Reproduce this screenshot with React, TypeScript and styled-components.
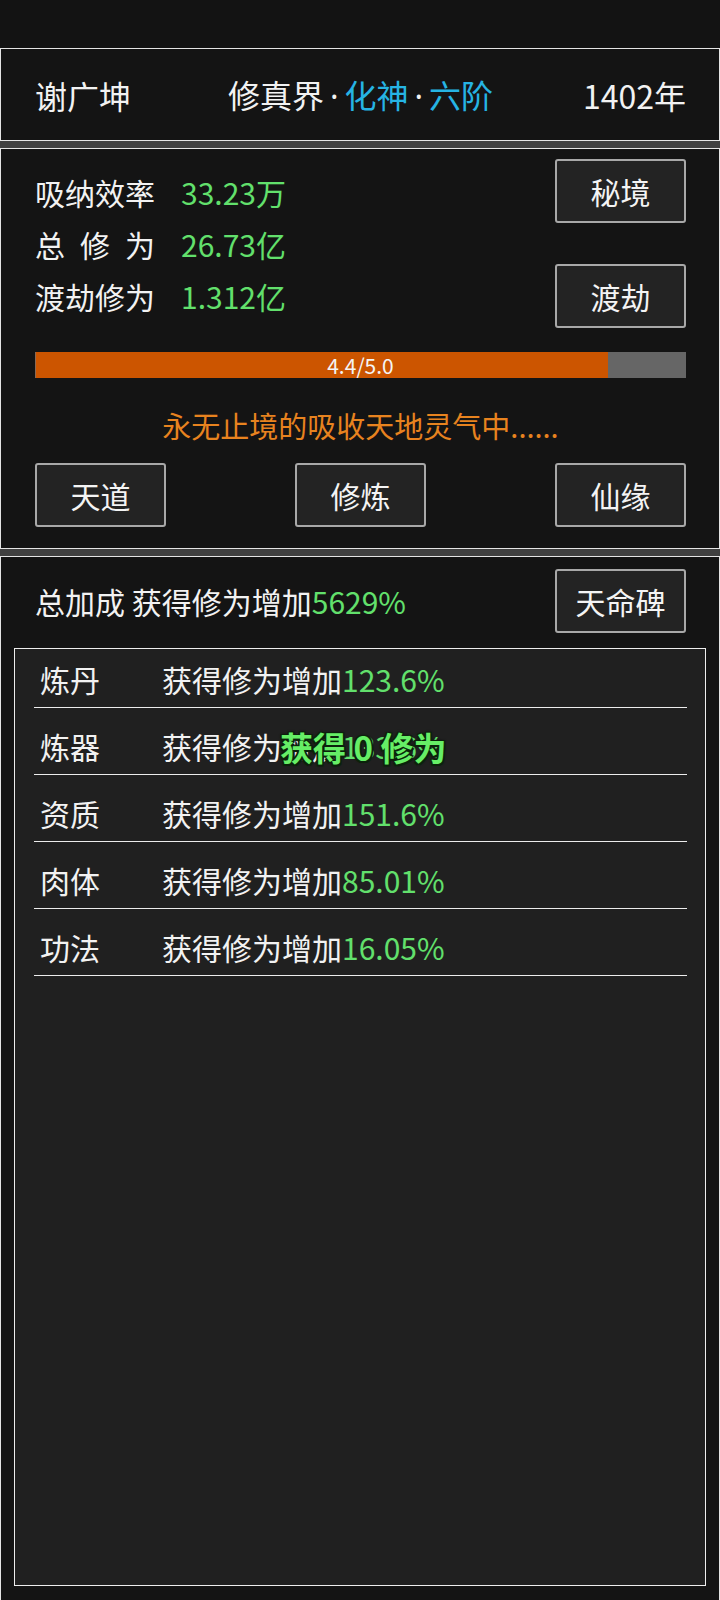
import React from 'react';
import styled, { createGlobalStyle } from 'styled-components';

const GlobalStyle = createGlobalStyle`
  html, body {
    margin: 0;
    padding: 0;
    background: #141414;
  }
  body {
    font-family: "Noto Sans CJK SC", "Noto Sans", sans-serif;
    color: #f2f2f2;
  }
  * {
    box-sizing: border-box;
  }
`;

const Page = styled.div`
  width: 720px;
  min-height: 1600px;
  display: flex;
  flex-direction: column;
  background: #141414;
`;

const TopBar = styled.div`
  height: 48px;
  flex: none;
  background: #131313;
`;

const Stack = styled.div`
  flex: 1;
  display: flex;
  flex-direction: column;
  gap: 7px;
  background: #404040;
`;

const Panel = styled.section<{ $grow?: boolean }>`
  background: #141414;
  border: 1px solid #e4e4e4;
  border-bottom: ${(p) => (p.$grow ? 'none' : '1px solid #e4e4e4')};
  padding: 0 33px 0 34px;
  ${(p) => (p.$grow ? 'flex: 1; display: flex; flex-direction: column;' : '')}
`;

const Header = styled(Panel)`
  height: 93px;
  display: grid;
  grid-template-columns: 1fr auto 1fr;
  align-items: center;
  font-size: 32px;
  line-height: 40px;
`;

const Name = styled.div`
  justify-self: start;
`;

const Realm = styled.div`
  justify-self: center;
`;

const Year = styled.div`
  justify-self: end;
`;

const Blue = styled.span`
  color: #26b4e4;
`;

const Dot = styled.span`
  font-family: "Noto Sans", sans-serif;
  margin: 0 6px;
  color: #f2f2f2;
`;

const StatsPanel = styled(Panel)`
  padding-top: 10px;
  padding-bottom: 21px;
`;

const StatsGrid = styled.div`
  display: flex;
  justify-content: space-between;
  align-items: center;
`;

const StatList = styled.div`
  display: flex;
  flex-direction: column;
`;

const StatRow = styled.div`
  display: flex;
  align-items: center;
  height: 52px;
  font-size: 30px;
`;

const StatLabel = styled.span<{ $spread?: boolean }>`
  display: inline-block;
  width: 146px;
  padding-right: 26px;
  text-align: ${(p) => (p.$spread ? 'justify' : 'left')};
  text-align-last: ${(p) => (p.$spread ? 'justify' : 'auto')};
`;

const Green = styled.span`
  color: #62e06c;
`;

const SideButtons = styled.div`
  display: flex;
  flex-direction: column;
  gap: 41px;
`;

const Button = styled.button`
  width: 131px;
  height: 64px;
  padding: 0;
  background: #232323;
  border: 2px solid #a8a8a8;
  border-radius: 3px;
  color: #f4f4f4;
  font-family: inherit;
  font-size: 30px;
  line-height: 1;
`;

const Bar = styled.div`
  position: relative;
  margin-top: 24px;
  height: 26px;
  background: #666666;
`;

const BarFill = styled.div`
  height: 100%;
  background: #cc5500;
  border-left: 1px solid #8a6a55;
`;

const BarText = styled.div`
  position: absolute;
  inset: 0;
  text-align: center;
  font-size: 21px;
  line-height: 26px;
  color: #f4f4f4;
`;

const Status = styled.div`
  margin-top: 27px;
  text-align: center;
  font-size: 29px;
  line-height: 40px;
  color: #e8831f;
`;

const ActionRow = styled.div`
  margin-top: 18px;
  display: flex;
  justify-content: space-between;
`;

const BonusPanel = styled(Panel)`
  padding: 12px 0 14px;
`;

const BonusHead = styled.div`
  display: flex;
  justify-content: space-between;
  align-items: center;
  padding: 0 33px 0 34px;
  font-size: 30px;
`;

const BonusBox = styled.div`
  position: relative;
  flex: 1;
  margin: 15px 13px 0;
  background: #202020;
  border: 1px solid #eeeeee;
  padding: 0 18px 0 19px;
`;

const BonusRow = styled.div`
  display: flex;
  align-items: flex-end;
  height: 67px;
  padding: 0 0 8px 6px;
  border-bottom: 1px solid #ececec;
  font-size: 30px;
  line-height: 40px;
  &:first-child {
    height: 59px;
  }
`;

const RowLabel = styled.span`
  width: 122px;
`;

const FloatText = styled.div`
  position: absolute;
  left: 265px;
  top: 78px;
  font-size: 33px;
  font-weight: 700;
  line-height: 40px;
  color: #66ee66;
  white-space: pre;
  text-shadow: -1.5px -1.5px 0 #0b220b, 1.5px -1.5px 0 #0b220b,
    -1.5px 1.5px 0 #0b220b, 1.5px 1.5px 0 #0b220b, 0 0 3px #000;
  pointer-events: none;
`;

const stats = [
  { label: '吸纳效率', value: '33.23万' },
  { label: '总修为', value: '26.73亿', spread: true },
  { label: '渡劫修为', value: '1.312亿' }
];

const bonuses = [
  { label: '炼丹', value: '123.6%' },
  { label: '炼器', value: '133.6%' },
  { label: '资质', value: '151.6%' },
  { label: '肉体', value: '85.01%' },
  { label: '功法', value: '16.05%' }
];

const progress = { now: 4.4, max: 5.0 };

const App: React.FC = () => {
  return (
    <>
      <GlobalStyle />
      <Page>
        <TopBar />
        <Stack>
          <Header>
            <Name>谢广坤</Name>
            <Realm>
              修真界<Dot>·</Dot>
              <Blue>化神</Blue>
              <Dot>·</Dot>
              <Blue>六阶</Blue>
            </Realm>
            <Year>1402年</Year>
          </Header>

          <StatsPanel>
            <StatsGrid>
              <StatList>
                {stats.map((s) => (
                  <StatRow key={s.label}>
                    <StatLabel $spread={s.spread}>{s.label}</StatLabel>
                    <Green>{s.value}</Green>
                  </StatRow>
                ))}
              </StatList>
              <SideButtons>
                <Button>秘境</Button>
                <Button>渡劫</Button>
              </SideButtons>
            </StatsGrid>
            <Bar>
              <BarFill
                style={{ width: `${(progress.now / progress.max) * 100}%` }}
              />
              <BarText>
                {progress.now.toFixed(1)}/{progress.max.toFixed(1)}
              </BarText>
            </Bar>
            <Status>永无止境的吸收天地灵气中......</Status>
            <ActionRow>
              <Button>天道</Button>
              <Button>修炼</Button>
              <Button>仙缘</Button>
            </ActionRow>
          </StatsPanel>

          <BonusPanel $grow>
            <BonusHead>
              <span>
                总加成 获得修为增加<Green>5629%</Green>
              </span>
              <Button>天命碑</Button>
            </BonusHead>
            <BonusBox>
              {bonuses.map((b) => (
                <BonusRow key={b.label}>
                  <RowLabel>{b.label}</RowLabel>
                  <span>
                    获得修为增加<Green>{b.value}</Green>
                  </span>
                </BonusRow>
              ))}
              <FloatText>{'获得 0 修为'}</FloatText>
            </BonusBox>
          </BonusPanel>
        </Stack>
      </Page>
    </>
  );
};

export default App;
